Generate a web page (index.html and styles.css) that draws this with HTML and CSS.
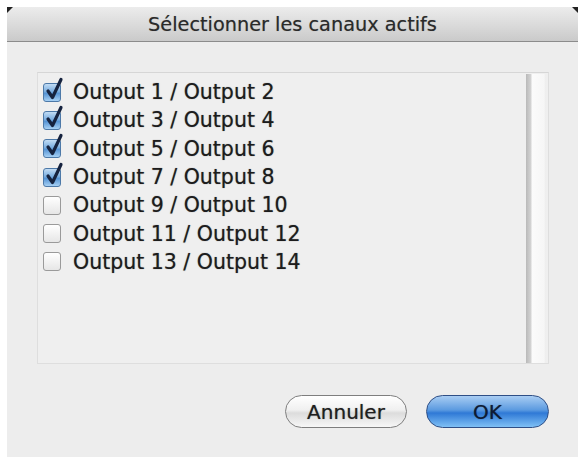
FILE: index.html
```html
<!DOCTYPE html>
<html lang="fr">
<head>
<meta charset="utf-8">
<title>Sélectionner les canaux actifs</title>
<link rel="stylesheet" href="styles.css">
</head>
<body>
<div class="window">
  <div class="titlebar"><span class="title">Sélectionner les canaux actifs</span></div>
  <div class="content">
    <div class="list">
      <div class="rows">
        <div class="row"><span class="box checked"><svg viewBox="0 0 22 26" width="22" height="26"><path class="tick" d="M5 14 L9.5 20.5 L18 2.5"/></svg></span><span class="label">Output 1 / Output 2</span></div>
        <div class="row"><span class="box checked"><svg viewBox="0 0 22 26" width="22" height="26"><path class="tick" d="M5 14 L9.5 20.5 L18 2.5"/></svg></span><span class="label">Output 3 / Output 4</span></div>
        <div class="row"><span class="box checked"><svg viewBox="0 0 22 26" width="22" height="26"><path class="tick" d="M5 14 L9.5 20.5 L18 2.5"/></svg></span><span class="label">Output 5 / Output 6</span></div>
        <div class="row"><span class="box checked"><svg viewBox="0 0 22 26" width="22" height="26"><path class="tick" d="M5 14 L9.5 20.5 L18 2.5"/></svg></span><span class="label">Output 7 / Output 8</span></div>
        <div class="row"><span class="box"></span><span class="label">Output 9 / Output 10</span></div>
        <div class="row"><span class="box"></span><span class="label">Output 11 / Output 12</span></div>
        <div class="row"><span class="box"></span><span class="label">Output 13 / Output 14</span></div>
      </div>
      <div class="scrollbar"></div>
    </div>
    <div class="buttons">
      <button class="btn cancel">Annuler</button>
      <button class="btn ok">OK</button>
    </div>
  </div>
</div>
</body>
</html>
```
FILE: styles.css
```css
html, body {
  margin: 0;
  padding: 0;
  background: #ffffff;
}
body {
  font-family: "DejaVu Sans", "Liberation Sans", sans-serif;
  color: #1a1a1a;
}
.window {
  margin: 7px 0 0 7px;
  width: 571px;
  height: 450px;
  display: flex;
  flex-direction: column;
  position: relative;
}
.window::before,
.window::after {
  content: "";
  position: absolute;
  top: 0;
  width: 0;
  height: 0;
  border-style: solid;
}
.window::before {
  left: 0;
  border-width: 6px 6px 0 0;
  border-color: #222 transparent transparent transparent;
}
.window::after {
  right: 0;
  border-width: 0 6px 6px 0;
  border-color: transparent #222 transparent transparent;
}
.titlebar {
  height: 34px;
  background: linear-gradient(#ececec, #d8d8d8 60%, #cacaca);
  border-bottom: 1px solid #8c8c8c;
  display: flex;
  align-items: center;
  justify-content: center;
}
.title {
  font-size: 19.3px;
  color: #2a2a2a;
  text-shadow: 0 0 0.8px rgba(0, 0, 0, 0.35);
}
.content {
  flex: 1;
  background: #ededed;
  padding: 30px 29px 0 30px;
  display: flex;
  flex-direction: column;
}
.list {
  height: 290px;
  background: #efefef;
  border: 1px solid #dedede;
  border-top-color: #d6d6d6;
  display: flex;
  justify-content: space-between;
}
.rows {
  padding: 5px 0 0 5px;
  display: flex;
  flex-direction: column;
}
.row {
  height: 28.3px;
  display: flex;
  align-items: center;
}
.box {
  width: 16px;
  height: 17px;
  border: 1px solid #9a9a9a;
  border-radius: 3px;
  background: linear-gradient(#ffffff, #e6e6e6);
  position: relative;
  flex: none;
}
.box.checked {
  border-color: #4d79a8;
  background: linear-gradient(#c2dcf4, #78acdf 45%, #5593d4 55%, #a6d0f4);
}
.box svg {
  position: absolute;
  left: -1px;
  top: -7px;
}
.tick {
  fill: none;
  stroke: #16233f;
  stroke-width: 3.2;
  stroke-linecap: round;
  stroke-linejoin: round;
}
.label {
  margin-left: 12px;
  font-size: 20.5px;
  color: #1c1c1c;
  text-shadow: 0 0 1px rgba(0, 0, 0, 0.5);
}
.scrollbar {
  width: 20px;
  margin: 1px 2px 0 0;
  background: linear-gradient(90deg, #b9b9b9, #d4d4d4 25%, #fbfbfb 30%, #f6f6f6 90%, #ececec);
}
.buttons {
  display: flex;
  justify-content: flex-end;
  gap: 19px;
  margin-top: 31px;
}
.btn {
  height: 33px;
  border-radius: 17px;
  font-family: "DejaVu Sans", "Liberation Sans", sans-serif;
  font-size: 20px;
  padding: 0;
  text-shadow: 0 0 1px rgba(0, 0, 0, 0.5);
}
.cancel {
  width: 122px;
  border: 1.5px solid #7e7e7e;
  background: linear-gradient(#ffffff, #f0f0f0 45%, #dcdcdc 55%, #f7f7f7);
  color: #1e1e1e;
}
.ok {
  width: 123px;
  border: 1.5px solid #2f4f86;
  background: linear-gradient(#a9cdf3, #5b9ae0 45%, #2f79d6 55%, #7fc0f5);
  color: #0e1a33;
}
```
